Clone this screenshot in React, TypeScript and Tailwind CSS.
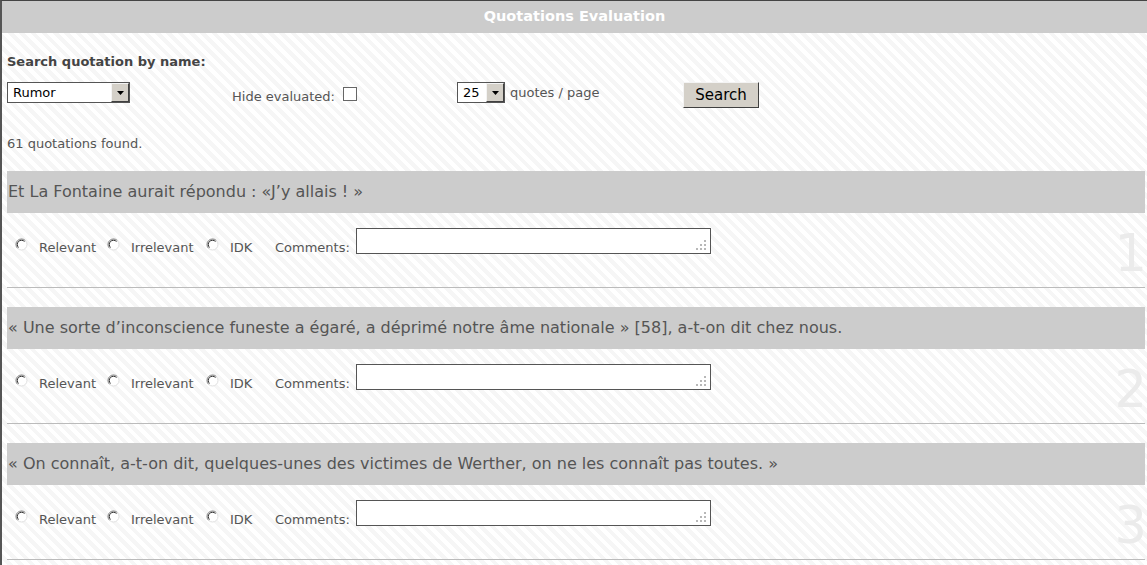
import React from "react";

const FONT = "font-['DejaVu_Sans',sans-serif]";

function Arrow() {
  return (
    <svg width="7" height="4" viewBox="0 0 7 4">
      <path d="M0 0h7L3.5 4z" fill="#000" />
    </svg>
  );
}

function SelectBox({ value, width }: { value: string; width: string }) {
  return (
    <div className={`flex items-center h-[21px] border border-[#555] bg-white ${width}`}>
      <span className="flex-1 pl-[5px] text-[13px] leading-[19px] text-black">{value}</span>
      <div className="flex items-center justify-center w-[18px] h-[19px] bg-[#d4d0c8] border border-t-[#f4f4f4] border-l-[#f4f4f4] border-b-[#404040] border-r-[#404040]">
        <Arrow />
      </div>
    </div>
  );
}

function Radio() {
  return (
    <svg width="13" height="13" viewBox="0 0 13 13" className="shrink-0">
      <circle cx="6.5" cy="6.5" r="5.5" fill="#fff" />
      <path d="M2.6 10.4 A5.5 5.5 0 0 1 10.4 2.6" stroke="#7a7a7a" fill="none" />
      <path d="M10.4 2.6 A5.5 5.5 0 0 1 2.6 10.4" stroke="#e0e0e0" fill="none" />
      <path d="M3.5 9.5 A4.2 4.2 0 0 1 9.5 3.5" stroke="#303030" fill="none" />
    </svg>
  );
}

function Grip() {
  return (
    <svg width="11" height="11" viewBox="0 0 11 11" className="absolute right-[3px] bottom-[2px]">
      <rect x="8" y="0" width="2" height="2" fill="#b8b8b8" />
      <rect x="4" y="4" width="2" height="2" fill="#b8b8b8" />
      <rect x="8" y="4" width="2" height="2" fill="#b8b8b8" />
      <rect x="0" y="8" width="2" height="2" fill="#b8b8b8" />
      <rect x="4" y="8" width="2" height="2" fill="#b8b8b8" />
      <rect x="8" y="8" width="2" height="2" fill="#b8b8b8" />
    </svg>
  );
}

const quotes = [
  "Et La Fontaine aurait répondu : «J’y allais ! »",
  "« Une sorte d’inconscience funeste a égaré, a déprimé notre âme nationale » [58], a-t-on dit chez nous.",
  "« On connaît, a-t-on dit, quelques-unes des victimes de Werther, on ne les connaît pas toutes. »",
];

function Quote({ text, n }: { text: string; n: number }) {
  return (
    <div className="relative">
      <div className="flex items-center h-[42px] bg-[#cccccc] text-[16px] text-[#555] pl-[1px] whitespace-nowrap overflow-hidden">
        {text}
      </div>
      <div className="flex items-end h-[74px] pt-[15px] pb-[33px] pl-[8px] text-[13px] text-[#555]">
        <span className="mb-[3px]"><Radio /></span>
        <span className="w-[79px] pl-[11px] leading-[16px] mb-[-2px]">Relevant</span>
        <span className="mb-[3px]"><Radio /></span>
        <span className="w-[86px] pl-[11px] leading-[16px] mb-[-2px]">Irrelevant</span>
        <span className="mb-[3px]"><Radio /></span>
        <span className="w-[56px] pl-[11px] leading-[16px] mb-[-2px]">IDK</span>
        <span className="w-[81px] leading-[16px] mb-[-2px]">Comments:</span>
        <div className="relative w-[355px] h-[26px] border border-[#555] bg-white">
          <Grip />
        </div>
      </div>
      <div className="absolute right-[-2px] top-[53px] text-[51px] leading-[60px] text-[#ebebeb]">{n}</div>
      <div className="h-px bg-[#bbbbbb]" />
      <div className="h-[19px]" />
    </div>
  );
}

export default function App() {
  return (
    <div
      className={`w-[1147px] h-[565px] overflow-hidden border-t border-t-[#444] border-l-2 border-l-[#555] bg-[repeating-linear-gradient(45deg,#ffffff_0px,#ffffff_4px,#f6f6f6_4px,#f6f6f6_8px)] ${FONT}`}
    >
      <div className="h-[32px] bg-[#cccccc] flex items-center justify-center text-white font-bold text-[14.5px]">
        Quotations Evaluation
      </div>
      <div className="pl-[5px] pr-[2px]">
        <div className="mt-[21px] text-[13px] font-bold text-[#444] leading-[16px]">Search quotation by name:</div>
        <div className="flex items-start mt-[12px] h-[26px] text-[13px] text-[#555]">
          <div className="w-[225px]">
            <SelectBox value="Rumor" width="w-[123px]" />
          </div>
          <div className="w-[225px] flex items-start">
            <span className="mt-[7px] leading-[16px]">Hide evaluated:</span>
            <span className="ml-[8px] mt-[5px] w-[14px] h-[14px] border border-[#666] bg-white" />
          </div>
          <div className="w-[226px] flex items-start">
            <SelectBox value="25" width="w-[48px]" />
            <span className="ml-[5px] mt-[3px] leading-[16px]">quotes / page</span>
          </div>
          <div className="flex items-center justify-center w-[76px] h-[26px] bg-[#d4d0c8] border border-t-[#f4f4f4] border-l-[#f4f4f4] border-b-[#404040] border-r-[#404040] text-[15px] text-black">
            Search
          </div>
        </div>
        <div className="mt-[28px] text-[13px] text-[#555] leading-[16px]">61 quotations found.</div>
        <div className="mt-[19px]">
          {quotes.map((q, i) => (
            <Quote key={i} text={q} n={i + 1} />
          ))}
        </div>
      </div>
    </div>
  );
}
